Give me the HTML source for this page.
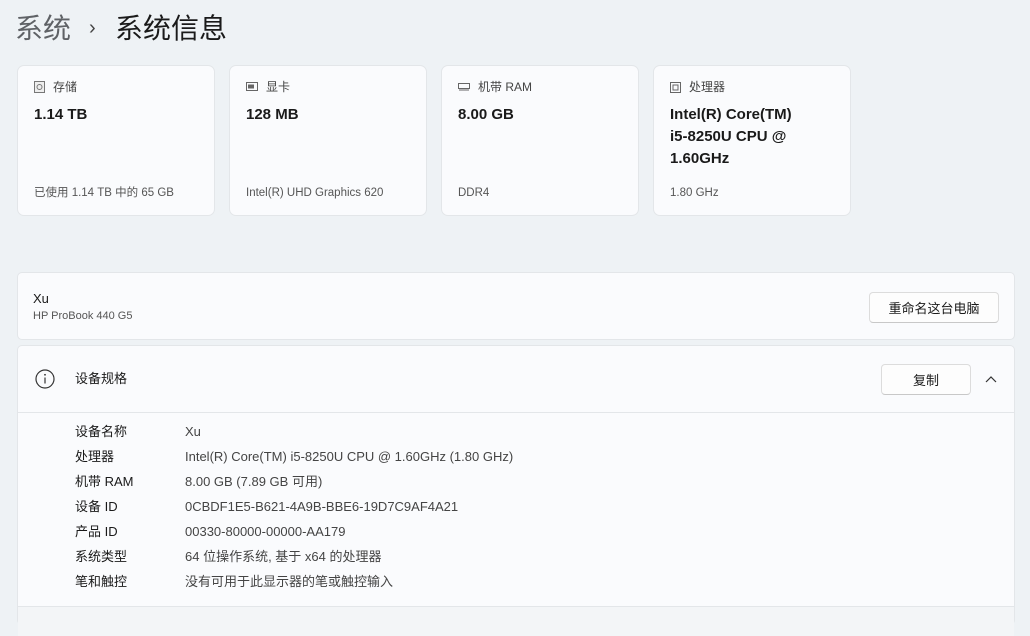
<!DOCTYPE html>
<html><head><meta charset="utf-8"><style>
*{margin:0;padding:0;box-sizing:border-box}
body{width:1030px;height:618px;overflow:hidden;background:#eef2f5;font-family:"Liberation Sans","Noto Sans CJK SC",sans-serif;color:#1a1a1a;position:relative}
.t{position:absolute;white-space:nowrap}
.card{position:absolute;top:65px;width:198px;height:151px;background:#fafbfd;border:1px solid #e3e6e9;border-radius:7px}
.card .h{position:absolute;left:16px;top:13px;font-size:12px;line-height:16px;height:16px;color:#444;display:flex;align-items:center;gap:8px}
.card .v{position:absolute;left:16px;top:38px;font-size:15px;font-weight:bold;line-height:22px}
.card .s{position:absolute;left:16px;top:119px;font-size:11.5px;line-height:16px;height:16px;color:#555}
.panel{position:absolute;left:17px;width:998px;background:#fafbfd;border:1px solid #e3e6e9;border-radius:5px}
.btn{position:absolute;background:#fdfdfd;border:1px solid #dcdcdc;border-bottom-color:#c8c8c8;border-radius:4px;font-size:13px;display:flex;align-items:center;justify-content:center}
.row{position:absolute;font-size:13px;line-height:18px;height:18px;color:#1a1a1a;white-space:nowrap}
.row span{position:absolute;left:110px;top:0;line-height:18px;color:#444;white-space:nowrap}
</style></head><body>
<div class="t" style="left:15px;top:10px;font-size:28px;line-height:38px;color:#5f6266">系统</div>
<div class="t" style="left:89px;top:15px;font-size:20px;line-height:26px;color:#444">›</div>
<div class="t" style="left:115px;top:10px;font-size:28px;line-height:38px;color:#1a1a1a">系统信息</div>

<div class="card" style="left:17px"><div class="h"><svg width="11" height="12"><rect x=".5" y=".5" width="10" height="11" fill="#eee" stroke="#777"/><circle cx="5.5" cy="6" r="2.5" fill="none" stroke="#777"/></svg>存储</div><div class="v">1.14 TB</div><div class="s">已使用 1.14 TB 中的 65 GB</div></div>
<div class="card" style="left:229px"><div class="h"><svg width="12" height="10"><rect x=".5" y=".5" width="11" height="8" fill="none" stroke="#666"/><rect x="2" y="2.5" width="6" height="4" fill="#666"/></svg>显卡</div><div class="v">128 MB</div><div class="s">Intel(R) UHD Graphics 620</div></div>
<div class="card" style="left:441px"><div class="h"><svg width="12" height="8"><rect x=".5" y=".5" width="11" height="5" fill="none" stroke="#666"/><line x1="1" y1="7" x2="11" y2="7" stroke="#666"/></svg>机带 RAM</div><div class="v">8.00 GB</div><div class="s">DDR4</div></div>
<div class="card" style="left:653px"><div class="h"><svg width="11" height="11"><rect x=".5" y=".5" width="10" height="10" fill="none" stroke="#666"/><rect x="3" y="3" width="5" height="5" fill="none" stroke="#666"/></svg>处理器</div><div class="v">Intel(R) Core(TM)<br>i5-8250U CPU @<br>1.60GHz</div><div class="s">1.80 GHz</div></div>

<div class="panel" style="top:272px;height:68px">
<div class="t" style="left:15px;top:17px;font-size:13px;line-height:18px">Xu</div>
<div class="t" style="left:15px;top:36px;font-size:11px;line-height:15px;color:#555">HP ProBook 440 G5</div>
<div class="btn" style="left:851px;top:19px;width:130px;height:31px">重命名这台电脑</div>
</div>

<div class="panel" style="top:345px;height:280px">
<div style="position:absolute;left:0;right:0;top:0;height:67px;border-bottom:1px solid #e3e6e9"></div>
<svg class="t" style="left:17px;top:23px" width="20" height="20"><circle cx="10" cy="10" r="9" fill="none" stroke="#333" stroke-width="1.2"/><line x1="10" y1="8.5" x2="10" y2="14.5" stroke="#333" stroke-width="1.2"/><circle cx="10" cy="5.8" r=".9" fill="#333"/></svg>
<div class="t" style="left:57px;top:24px;font-size:13px;line-height:18px">设备规格</div>
<div class="btn" style="left:863px;top:18px;width:90px;height:31px">复制</div>
<svg class="t" style="left:967px;top:29px" width="12" height="8"><path d="M1 7L6 2L11 7" fill="none" stroke="#333" stroke-width="1.2"/></svg>
<div class="row" style="left:57px;top:77px">设备名称<span>Xu</span></div>
<div class="row" style="left:57px;top:102px">处理器<span>Intel(R) Core(TM) i5-8250U CPU @ 1.60GHz (1.80 GHz)</span></div>
<div class="row" style="left:57px;top:127px">机带 RAM<span>8.00 GB (7.89 GB 可用)</span></div>
<div class="row" style="left:57px;top:152px">设备 ID<span>0CBDF1E5-B621-4A9B-BBE6-19D7C9AF4A21</span></div>
<div class="row" style="left:57px;top:177px">产品 ID<span>00330-80000-00000-AA179</span></div>
<div class="row" style="left:57px;top:202px">系统类型<span>64 位操作系统, 基于 x64 的处理器</span></div>
<div class="row" style="left:57px;top:227px">笔和触控<span>没有可用于此显示器的笔或触控输入</span></div>
<div style="position:absolute;left:0;right:0;top:260px;height:30px;border-top:1px solid #e3e6e9;background:#f3f5f7"></div>
</div>
</body></html>
